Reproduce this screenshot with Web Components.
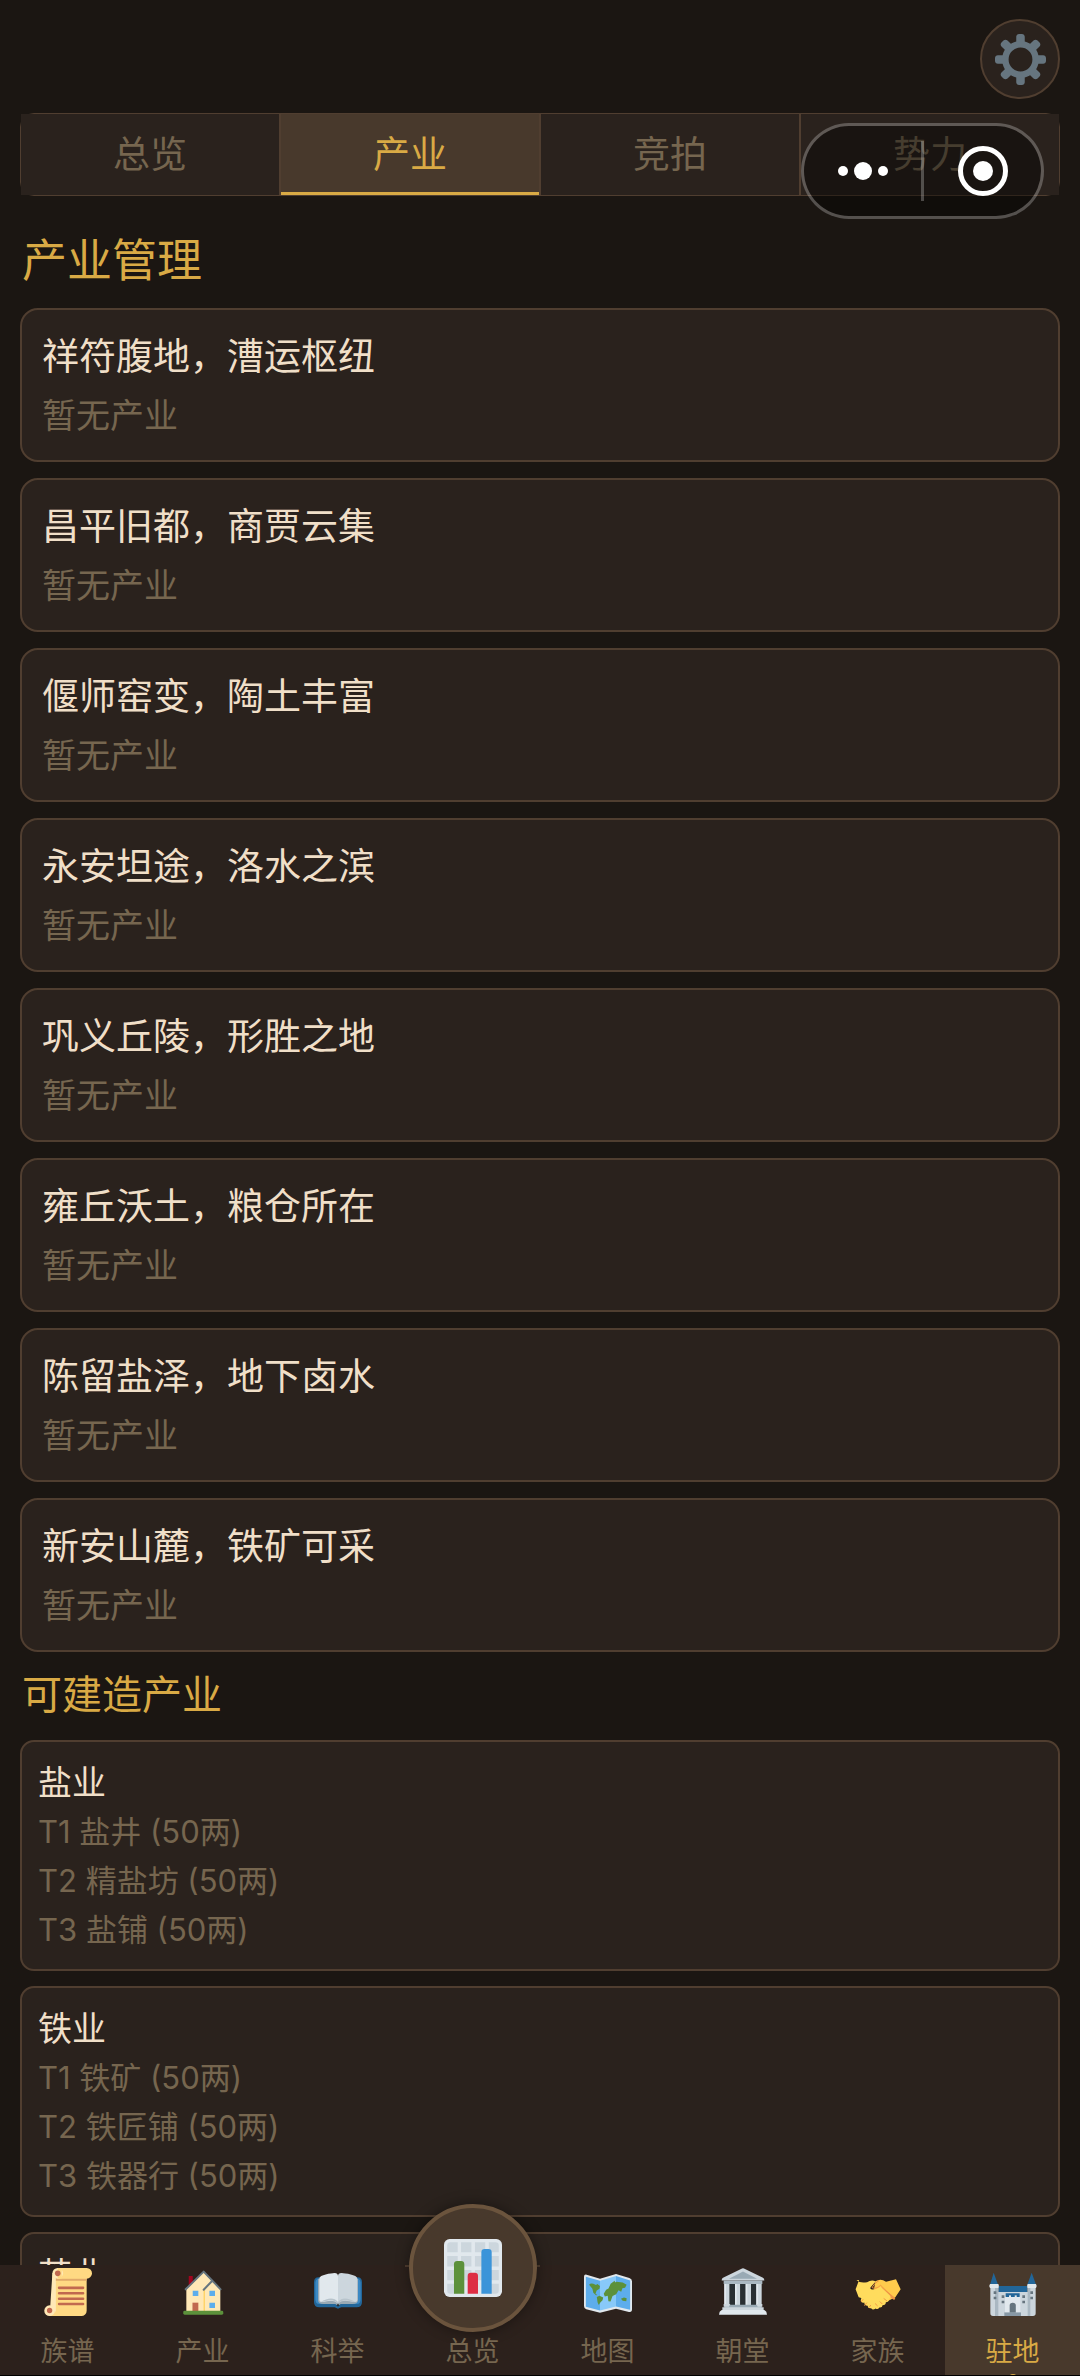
<!DOCTYPE html>
<html lang="zh-CN">
<head>
<meta charset="utf-8">
<meta name="viewport" content="width=device-width, initial-scale=1">
<title>产业管理</title>
<style>
  :root {
    --bg: #1b1612;
    --panel: #2a221d;
    --panel-active: #48392c;
    --line: #503e30;
    --gold: #d9aa45;
    --cream: #f0dfc8;
    --muted: #76664f;
    --nav: #2c211c;
  }
  html, body { margin: 0; height: 100%; background: var(--bg); }
  body { font-family: "Noto Sans CJK SC", sans-serif; color: var(--cream); }
</style>
</head>
<body>
<game-app>
  <icon-button slot="header" label="设置"></icon-button>
  <tab-bar slot="tabs">
    <tab-item>总览</tab-item>
    <tab-item selected>产业</tab-item>
    <tab-item>竞拍</tab-item>
    <tab-item>势力</tab-item>
  </tab-bar>
  <capsule-menu slot="overlay"></capsule-menu>

  <page-section size="large">
    <span slot="title">产业管理</span>
    <land-card>祥符腹地，漕运枢纽<span slot="status">暂无产业</span></land-card>
    <land-card>昌平旧都，商贾云集<span slot="status">暂无产业</span></land-card>
    <land-card>偃师窑变，陶土丰富<span slot="status">暂无产业</span></land-card>
    <land-card>永安坦途，洛水之滨<span slot="status">暂无产业</span></land-card>
    <land-card>巩义丘陵，形胜之地<span slot="status">暂无产业</span></land-card>
    <land-card>雍丘沃土，粮仓所在<span slot="status">暂无产业</span></land-card>
    <land-card>陈留盐泽，地下卤水<span slot="status">暂无产业</span></land-card>
    <land-card>新安山麓，铁矿可采<span slot="status">暂无产业</span></land-card>
  </page-section>
  <page-section>
    <span slot="title">可建造产业</span>
    <build-card>盐业
      <span slot="tier">T1 盐井 (50两)</span>
      <span slot="tier">T2 精盐坊 (50两)</span>
      <span slot="tier">T3 盐铺 (50两)</span>
    </build-card>
    <build-card>铁业
      <span slot="tier">T1 铁矿 (50两)</span>
      <span slot="tier">T2 铁匠铺 (50两)</span>
      <span slot="tier">T3 铁器行 (50两)</span>
    </build-card>
    <build-card>茶业</build-card>
  </page-section>

  <nav-bar slot="nav">
    <nav-item icon="scroll">族谱</nav-item>
    <nav-item icon="house">产业</nav-item>
    <nav-item icon="book">科举</nav-item>
    <nav-item icon="chart" raised>总览</nav-item>
    <nav-item icon="map">地图</nav-item>
    <nav-item icon="court">朝堂</nav-item>
    <nav-item icon="hands">家族</nav-item>
    <nav-item icon="castle" selected>驻地</nav-item>
  </nav-bar>
</game-app>

<script>
const ICONS = {
  gear: `<path fill="#66757F" d="M34 15h-3.362c-.324-1.369-.864-2.651-1.582-3.814l2.379-2.379c.781-.781.781-2.048 0-2.829l-1.414-1.414c-.781-.781-2.047-.781-2.828 0l-2.379 2.379C23.65 6.225 22.369 5.686 21 5.362V2c0-1.104-.896-2-2-2h-2c-1.104 0-2 .896-2 2v3.362c-1.369.324-2.651.864-3.814 1.582L8.808 4.565c-.781-.781-2.048-.781-2.828 0L4.565 5.979c-.781.781-.781 2.048-.001 2.829l2.379 2.379C6.225 12.35 5.686 13.632 5.362 15H2c-1.104 0-2 .896-2 2v2c0 1.104.896 2 2 2h3.362c.324 1.368.864 2.65 1.582 3.813l-2.379 2.379c-.78.78-.78 2.048.001 2.829l1.414 1.414c.78.78 2.047.78 2.828 0l2.379-2.379c1.163.719 2.445 1.258 3.814 1.582V34c0 1.104.896 2 2 2h2c1.104 0 2-.896 2-2v-3.362c1.368-.324 2.65-.864 3.813-1.582l2.379 2.379c.781.781 2.047.781 2.828 0l1.414-1.414c.781-.781.781-2.048 0-2.829l-2.379-2.379c.719-1.163 1.258-2.445 1.582-3.814H34c1.104 0 2-.896 2-2v-2C36 15.896 35.104 15 34 15zM18 26.4a8.4 8.4 0 1 1 0-16.800 8.400 8.400 0 0 1 0 16.800z"/>`,
  scroll: `<path fill="#FFD983" d="M6.300 5h25.700v27a4 4 0 0 1-4 4H4l2.300-4z"/><path fill="#FFE8B6" d="M6.300 4h2.600v28a4.500 4 0 0 1-4.700 4z"/><circle cx="4.200" cy="32" r="4" fill="#FFE8B6"/><path fill="#FFD983" d="M8.200 32a4 4 0 0 1-4 4h6z"/><circle cx="4.200" cy="31.900" r="2" fill="#C1694F"/><path fill="#E2AA6A" d="M8.900 7.600H32v2H8.900z"/><path fill="#FFD983" d="M10.300 0H32a4 4 0 0 1 0 8H10.300z"/><circle cx="10.300" cy="4" r="4" fill="#FFE8B6"/><path fill="#FFD983" d="M10.300 0h3v8h-3z"/><circle cx="10.300" cy="4" r="2.100" fill="#C1694F"/><path stroke="#C1694F" stroke-width="1.900" stroke-linecap="round" d="M11.300 14.900h18M11.300 19h18M11.300 23h18M11.300 27h18"/>`,
  house: `<path fill="#A0041E" d="M7.300 6h3v7h-3z"/><path fill="#FFE8B6" d="M5.500 16 18.500 3l6 6.500L31 16v16.500H5.500z"/><path fill="#FFCC4D" d="M18.500 16.500h.8v16h-.8z"/><path fill="none" stroke="#66757F" stroke-width="1.500" stroke-linecap="round" stroke-linejoin="round" d="M5 16 18.500 2.700 31.200 16M18.500 16.300 24.800 9.800"/><path fill="#5DADEC" d="M10.300 17h4.200v4h-4.200zM22.800 17H27v4h-4.200zM22.800 26H27v4h-4.200z"/><path fill="#C1694F" d="M10.100 26h4.400v6.500h-4.400z"/><rect x="3.200" y="32" width="30" height="3" rx="1" fill="#5C913B"/>`,
  book: `<path fill="#269" d="M3.500 7h29Q36 7 36 10.500v15Q36 29.500 32 29.500H20.500L18 30.500l-2.500-1H4Q0 29.500 0 25.500v-15Q0 7 3.500 7z"/><path fill="#3B88C3" d="M2.500 8h31q1.500 1 1.500 3v12q0 4-3 4H19l-1 2-1-2H4q-3 0-3-4V11q0-2 1.500-3z"/><path fill="#99AAB5" d="M3 8h30v16q0 3-4 3h-9l-2 1.500L16 27H7q-4 0-4-3z"/><path fill="#E1E8ED" d="M4 8C4 5 13 4 15.300 3.800 17.500 3.900 18 5 18 6v20.500c-4-3.500-8-1.500-12-1q-2 .2-2-1.500z"/><path fill="#CCD6DD" d="M32.500 8c0-3-9.300-4-11.700-4.200C18.500 3.900 18 5 18 6v20.500c4-3.500 8-1.500 12.500-1q2 .2 2-1.500z"/><path fill="#B8C4CC" d="M5 25.500c5-1 9-3 13 1 4-4 8-2 13-1-5-3-10-4-13 0-3-4-8-3-13 0z"/><path fill="#292F33" d="M16.800 28 18 26.800 19.200 28 18 29z"/>`,
  chart: `<rect width="36" height="36" rx="3.500" fill="#E1E8ED"/><g fill="#CCD6DD"><path d="M4 2h4.500v6.300H2V4q0-2 2-2zM10.600 2H17v6.300h-6.400zM19.200 2h6.400v6.300h-6.400zM27.800 2H32q2 0 2 2v4.300h-6.200zM2 10.600h6.500V17H2zM10.600 10.600H17V17h-6.400zM19.200 10.600h6.400V17h-6.400zM27.800 10.600H34V17h-6.200zM2 19.200h6.500v6.400H2zM10.600 19.200H17v6.400h-6.400zM19.200 19.200h6.400v6.400h-6.400zM27.800 19.200H34v6.400h-6.200zM2 27.800h6.500V34H4q-2 0-2-2zM27.800 27.800H34V32q0 2-2 2h-4.200z"/></g><path fill="#5C913B" d="M6.200 34V15.600q0-2 2-2h2.400q2 0 2 2V34z"/><path fill="#DD2E44" d="M14.700 34V23q0-2 2-2h2.400q2 0 2 2v11z"/><path fill="#3B94D9" d="M23.200 34V8.200q0-2 2-2h2.400q2 0 2 2V34z"/>`,
  map: `<path fill="#E1E8ED" d="M2 5 12 8 24 4.500 34 7.500Q36 8 36 10v21q0 2.500-2.300 2L24 30.500 12 33.500 1.700 31Q0 30.500 0 28.500V6.500Q0 4.500 2 5z"/><path fill="#5DADEC" d="m1.400 6.500 10.600 3v22.400L1.400 29zM24 6l10.600 3.300v22L24 28.800z"/><path fill="#88C9F9" d="M12 9.500 24 6v22.800l-12 3.100z"/><g fill="#5C913B"><path d="M3.800 12.500q1-1.300 3.200-.7l2 1 1-.8 2 1.500-.4 2-2.100 1.400-.9 2.400 1.400.9-1 .3-2-2-.7-3zM9.600 21.800l2-1 2.800 1.400-.5 2-1.800 1.900-1 1.700-.9-2zM22 11.400l2.400-1 4.600.4 3 1.800-1.200 2.200-2 .4-.9 2.600-2-1.200-2 3.400z"/><path d="m20 11.800 3-2.200 1 5v5l-2.600 1.400-1.500 4.200-1.600-.3-.5-4.100-2.200.5-.8-2 1.800-3 1.800-1zM27.700 23l2.300-.9 2 .5-.3 2.300-2.700-.3z"/></g>`,
  court: `<path fill="#CCD6DD" d="M18 .2q.7 0 1.500.5L33 7.300q1 .6 1 2H2q0-1.400 1-2L16.500.7Q17.300.2 18 .2z"/><path fill="#99AAB5" d="M18 2.700 28.500 8h-21z"/><path fill="#AAB8C2" d="M3.500 9.300h29V12h-29z"/><path fill="#292F33" d="M5 12h26v16H5z"/><path fill="#CCD6DD" d="M4 12h3.800v16H4zM12 12h3.800v16H12zM20 12h4v16h-4zM28 12h4v16h-4z"/><path fill="#E1E8ED" d="M4 12h1.300v16H4zM12 12h1.300v16H12zM20 12h1.300v16H20zM28 12h1.300v16H28z"/><path fill="#99AAB5" d="M4 27.500h28v3H4z"/><path fill="#CCD6DD" d="M3.500 27h5l-1 2h-4zM28 27h4.500v2H29zM2.500 29.500h31V32h-31z"/><path fill="#E1E8ED" d="M2 31.500h32q2 1 2 3.500H0q0-2.500 2-3.500z"/>`,
  hands: `<path fill="#FFCB4C" d="M31.500 8.500 35 16l-4 6-6 3-10-9 1-6q4-2.500 8 .3z"/><path fill="#EF9645" d="M14 15.500q3 1.500 7-1l10 8-.8 1.500L20 18z"/><path fill="#FFDC5D" d="M3.800 9 1.200 16l2.300 6 2 .5-.5 2q.8 2.200 2.800 1.300-.3 2.600 2.400 2.500.2 2.400 2.700 1.800 1 2 3.300.2 1.700 1.200 2.700-.7 2.400.3 2.500-1.700 2.500 0 2.500-2.200 2.600-.2 2.200-2.500 2.300-.8.700-2.700l-6.800-6.500q-3 2.300-6.500 2.200-1.800-.3-1-1.800l3.800-4.300q-3-1.500-6.500.5-5 1.200-8-1.600z"/><path fill="none" stroke="#EF9645" stroke-width=".7" stroke-linecap="round" stroke-linejoin="round" d="M18.500 9.500q-3 1.500-5 5.200 2.800 1.500 6.500-1.700l7.500 7.300M22.500 23l2 1.500M19.500 25.300l1.500 1.500M16 26.800l1.500 1.500M5.500 25.200l1.200-1.500M8 28l1.500-1.800M11.500 29.300l1-1.300"/>`,
  castle: `<path fill="#269" d="M3.500 3.500 6.800 12.500H.8zM32 3.500l3.300 9h-6.600zM7 13.500h21.800V20H7z"/><path fill="#CCD6DD" d="M1 14.500h6V36H3q-2 0-2-2zM29 14.500h6V34q0 2-2 2h-4zM7 18h22v18H7z"/><path fill="#AAB8C2" d="M4.500 14.500H7V36H4.500zM29 14.500h2V36h-2z"/><path fill="#E1E8ED" d="M.800 12h6.200q.8 1.500 0 3H.8Q-.3 13.500.8 12zM29 12h6.200q1 1.500 0 3H29q-.8-1.500 0-3zM12 21h11.500v14H12z"/><path fill="#269" d="M12.500 19h10.500v2.800h-2.200v-1.300h-1.500v1.300h-2.800v-1.300H15v1.300h-2.500z"/><path fill="#66757F" d="M15.500 33.500V28q0-2 2.300-2t2.300 2v5.500zM3.500 17.500h2v2h-2zM3.500 21.500h2v2h-2zM9.500 20.500h2v2h-2zM9.500 24.500h2v2h-2zM25 20.500h2v2h-2zM25 24.500h2v2h-2zM31 17.500h2v2h-2zM31 21.500h2v2h-2z"/><path fill="#8899A6" d="M11.500 33.300H24V36H11.500z"/>`
};
const svg = name => `<svg viewBox="0 0 36 36" aria-hidden="true">${ICONS[name]}</svg>`;

class Base extends HTMLElement {
  constructor() {
    super();
    this.attachShadow({ mode: 'open' });
  }
  connectedCallback() {
    this.shadowRoot.innerHTML =
      `<style>*{box-sizing:border-box}button{font:inherit;color:inherit;background:none;border:0;padding:0;margin:0}svg{display:block}${this.css()}</style>${this.html()}`;
  }
}

customElements.define('game-app', class extends Base {
  css() { return `
    :host { display: flex; flex-direction: column; height: 100vh; overflow: hidden; position: relative; }
    header { display: flex; justify-content: flex-end; padding: 19px 20px 14px; }
    .tabs { padding: 0 20px; }
    main { flex: 1; min-height: 0; overflow: hidden; padding: 0 20px; }
  `; }
  html() { return `
    <header><slot name="header"></slot></header>
    <div class="tabs"><slot name="tabs"></slot></div>
    <main><slot></slot></main>
    <slot name="nav"></slot>
    <slot name="overlay"></slot>`; }
});

customElements.define('icon-button', class extends Base {
  css() { return `
    :host { display: block; }
    button { display: flex; align-items: center; justify-content: center; width: 80px; height: 80px;
      border: 2px solid var(--line); border-radius: 50%; background: var(--panel); }
    svg { width: 51px; height: 51px; }
  `; }
  html() { return `<button aria-label="${this.getAttribute('label')}">${svg('gear')}</button>`; }
});

customElements.define('tab-bar', class extends Base {
  css() { return `
    :host { display: flex; border: 1px solid var(--line); border-radius: 14px; }
  `; }
  html() { return `<slot></slot>`; }
});

customElements.define('tab-item', class extends Base {
  css() { return `
    :host { display: block; flex: 1; background: var(--panel); color: var(--muted); border-right: 2px solid var(--line); }
    :host(:last-child) { border-right: 0; }
    :host([selected]) { background: var(--panel-active); color: var(--gold); box-shadow: inset 0 -3px var(--gold); }
    button { display: block; width: 100%; font-size: 37px; line-height: 55px; padding: 11px 0 15px; }
  `; }
  html() { return `<button><slot></slot></button>`; }
});

customElements.define('capsule-menu', class extends Base {
  css() { return `
    :host { position: absolute; top: 123px; right: 36px; display: flex; align-items: center;
      width: 243px; height: 96px; box-sizing: border-box; border: 3px solid rgba(255,255,255,.25);
      border-radius: 48px; background: rgba(0,0,0,.4); background-clip: padding-box; }
    button { flex: 1; display: flex; align-items: center; justify-content: center; height: 100%; }
    i { width: 3px; height: 60px; background: rgba(255,255,255,.25); }
    svg { width: 52px; height: 52px; }
  `; }
  html() { return `
    <button aria-label="更多"><svg viewBox="0 0 52 52" fill="#fff"><circle cx="6" cy="26" r="5"/><circle cx="26" cy="26" r="9"/><circle cx="46" cy="26" r="5"/></svg></button>
    <i></i>
    <button aria-label="关闭"><svg viewBox="0 0 52 52"><circle cx="26" cy="26" r="22.500" fill="none" stroke="#fff" stroke-width="5"/><circle cx="26" cy="26" r="10" fill="#fff"/></svg></button>`; }
});

customElements.define('page-section', class extends Base {
  css() { return `
    :host { display: block; color: var(--cream); }
    h2 { margin: 0; padding: 12px 0 20px 2px; font-size: 40px; line-height: 56px; font-weight: 400; color: var(--gold); }
    :host([size=large]) h2 { padding-top: 32px; font-size: 45px; line-height: 60px; }
    div { display: flex; flex-direction: column; gap: 15px; }
    :host([size=large]) div { gap: 16px; }
  `; }
  html() { return `<h2><slot name="title"></slot></h2><div><slot></slot></div>`; }
});

customElements.define('land-card', class extends Base {
  css() { return `
    :host { display: block; padding: 19px 20px 23px; border: 2px solid var(--line); border-radius: 18px; background: var(--panel); }
    h3 { margin: 0 0 12px; font-size: 37px; line-height: 50px; font-weight: 400; }
    p { margin: 0; font-size: 34px; line-height: 46px; color: var(--muted); }
  `; }
  html() { return `<h3><slot></slot></h3><p><slot name="status"></slot></p>`; }
});

customElements.define('build-card', class extends Base {
  css() { return `
    :host { display: block; padding: 14px 16px 15px; border: 2px solid var(--line); border-radius: 14px; background: var(--panel); }
    h3 { margin: 0 0 2px; font-size: 34px; line-height: 49px; font-weight: 400; }
    .tiers { display: flex; flex-direction: column; font-family: Inter, "Noto Sans CJK SC", sans-serif;
      font-size: 31px; line-height: 49px; color: var(--muted); }
  `; }
  html() { return `<h3><slot></slot></h3><div class="tiers"><slot name="tier"></slot></div>`; }
});

customElements.define('nav-bar', class extends Base {
  css() { return `
    :host { display: block; position: relative; background: var(--nav); border-bottom: 1px solid #000; }
    nav { display: flex; }
  `; }
  html() { return `<nav><slot></slot></nav>`; }
});

customElements.define('nav-item', class extends Base {
  css() { return `
    :host { display: block; flex: 1; }
    a { display: flex; flex-direction: column; align-items: center; height: 110px; padding-top: 3px;
      position: relative; color: var(--muted); text-decoration: none; }
    svg { width: 48px; height: 48px; }
    .icon { display: flex; align-items: center; justify-content: center; margin-bottom: 14px; }
    .label { font-size: 27px; line-height: 40px; }
    :host([selected]) a { background: var(--panel-active); color: var(--gold); overflow: hidden; }
    :host([selected]) a::after { content: ""; position: absolute; bottom: -7px; width: 8px; height: 8px; border-radius: 50%; background: var(--gold); }
    :host([raised]) a { box-shadow: inset 0 2px var(--line); }
    :host([raised]) .icon { width: 128px; height: 128px; margin: -64px 0 -2px; border: 4px solid #6b543d;
      border-radius: 50%; background: var(--panel-active); box-shadow: 0 0 14px rgba(0,0,0,.4); }
    :host([raised]) svg { width: 58px; height: 58px; }
    :host([raised]) .label { position: relative; }
  `; }
  html() { return `<a href="#"><span class="icon">${svg(this.getAttribute('icon'))}</span><span class="label"><slot></slot></span></a>`; }
});
</script>
</body>
</html>
